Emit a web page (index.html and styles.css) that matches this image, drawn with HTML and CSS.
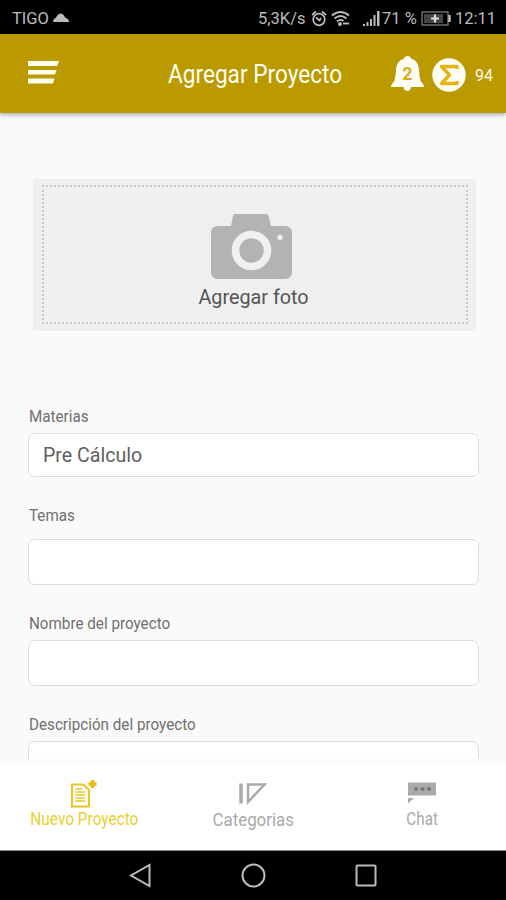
FILE: index.html
```html
<!DOCTYPE html>
<html lang="es">
<head>
  <meta charset="UTF-8" />
  <meta name="viewport" content="width=device-width, initial-scale=1" />
  <title>Agregar Proyecto</title>
  <link rel="stylesheet" href="styles.css">
</head>
<body>

<div class="status-bar">
  <span class="carrier">TIGO</span>
  <svg class="cloud" width="16" height="9" viewBox="0 0 16 9"><path d="M0 9Q0 6 2.500 5Q4 2.500 6 .8Q9 0 11 2.500Q12 4.500 13 5Q16 6 16 9Z" fill="#bbb"/></svg>
  <span class="speed">5,3K/s</span>
  <svg class="alarm" width="16" height="17" viewBox="0 0 16 17" fill="none" stroke="#bbb" stroke-width="1.700"><circle cx="8" cy="9.500" r="5.800"/><path d="M1 5L5 1.500M15 5L11 1.500M5 7.500L8.500 10.500L10 8"/></svg>
  <svg class="wifi" width="19" height="17" viewBox="0 0 19 17" fill="none" stroke="#bbb" stroke-width="1.900"><path d="M1 5.500Q9.500-1.500 18 5.500M3.500 8.500Q9.500 3.500 15.500 8.500M6 11.500Q9.500 8.500 12.500 11"/><circle cx="9" cy="14" r="1" fill="#bbb"/><path d="M12 13.500H18"/></svg>
  <svg class="signal" width="17" height="15" viewBox="0 0 17 15" fill="#bbb"><path d="M0 13h2v2H0zM3.500 11h2v4h-2zM7 8h2v7H7zM10.500 4h2v11h-2zM14 0h2.500v15H14z"/></svg>
  <span class="percent">71 %</span>
  <svg class="battery" width="31" height="15" viewBox="0 0 31 15"><rect x="1" y="1" width="26" height="13" fill="none" stroke="#888" stroke-width="1.200"/><rect x="3" y="3" width="19" height="9" fill="#444"/><path d="M28.500 4v7" stroke="#bbb" stroke-width="2.500"/><path d="M14 3.500v8M10 7.500h8" stroke="#ddd" stroke-width="2.200"/></svg>
  <span class="clock">12:11</span>
</div>

<header>
  <svg class="menu-icon" width="31" height="23" viewBox="0 0 31 23" fill="#fffef0"><path d="M0 0H31L29.200 5H0zM0 9H28.500L27 13.500H0zM0 17.500H26.500L25 22.500H0z"/></svg>
  <h1>Agregar Proyecto</h1>
  <svg class="bell" width="33" height="35" viewBox="0 0 33 35"><path d="M16.500 0Q19.500 0 20 2.500Q27.500 5 28 13L28.500 20Q29 25 32 28Q33 29.500 33 31H20Q19.500 35 16.500 35Q13 35 12.500 31H0Q0 29.500 1 28Q4 25 4.500 20L5 13Q5.500 5 13 2.500Q13.500 0 16.500 0Z" fill="#fffef5"/><text x="16.500" y="24" text-anchor="middle">2</text></svg>
  <svg class="sigma" width="34" height="34" viewBox="0 0 34 34"><circle cx="17" cy="17" r="16.700" fill="#fffef5"/><path d="M25 11V8.500H9.500L17.500 17L9.500 25.500H25V23" fill="none" stroke="#e5b414" stroke-width="3.400" stroke-linejoin="round"/></svg>
  <span class="points">94</span>
</header>

<main>
  <div class="photo">
    <div class="photo-inner">
      <svg width="81" height="65" viewBox="0 0 81 65"><path d="M24 0H55Q57 0 57.500 2L60 12H74Q81 12 81 19V58Q81 65 74 65H7Q0 65 0 58V19Q0 12 7 12H20L22 2Q22.500 0 24 0Z" fill="#b3b3b3"/><circle cx="40.500" cy="36.500" r="16" fill="none" stroke="#f0f0f0" stroke-width="7.500"/><circle cx="69" cy="23.500" r="2.700" fill="#f0f0f0"/></svg>
      <span>Agregar foto</span>
    </div>
  </div>

  <label for="materias">Materias</label>
  <input type="text" id="materias" class="field short" value="Pre Cálculo" />
  <label class="temas" for="temas">Temas</label>
  <input type="text" id="temas" class="field" />
  <label for="nombre">Nombre del proyecto</label>
  <input type="text" id="nombre" class="field" />
  <label for="descripcion">Descripción del proyecto</label>
  <input type="text" id="descripcion" class="field" />
</main>

<nav class="tabs">
  <a class="tab active">
    <svg width="26" height="29" viewBox="0 0 26 29" fill="none" stroke="#e9c622"><path d="M1 5.500H12.500L18 11V27.500H1z" stroke-width="2"/><path d="M4.500 10H11M4.500 13H14M4.500 16H14M4.500 19H14M4.500 22H14" stroke-width="1.500"/><path d="M21.500 1v8M17.500 5h8" stroke="#eabb10" stroke-width="3.500"/></svg>
    <span class="nuevo">Nuevo Proyecto</span>
  </a>
  <a class="tab">
    <svg width="28" height="22" viewBox="0 0 28 22" fill="none" stroke="#aaa"><path d="M2 1V21" stroke-width="3.500"/><path d="M9 2H25.500L9 19.500z" stroke-width="2.500"/></svg>
    <span class="categorias">Categorias</span>
  </a>
  <a class="tab">
    <svg width="28" height="22" viewBox="0 0 28 22"><path d="M0 0H28V13H0zM0 15.500H6L0 21z" fill="#aaa"/><g fill="#777"><circle cx="8" cy="6.500" r="2"/><circle cx="14.500" cy="6.500" r="2"/><circle cx="21" cy="6.500" r="2"/></g></svg>
    <span class="chat">Chat</span>
  </a>
</nav>

<div class="nav-bar">
  <svg width="23" height="25" viewBox="0 0 23 25"><path d="M20.500 2V23L2 12.500z"/></svg>
  <svg width="25" height="25" viewBox="0 0 25 25"><circle cx="12.500" cy="12.500" r="11"/></svg>
  <svg width="23" height="23" viewBox="0 0 23 23"><rect x="1.500" y="1.500" width="19" height="20" rx="1"/></svg>
</div>

</body>
</html>
```

FILE: styles.css
```css
* {
  box-sizing: border-box;
}
body {
  margin: 0;
  height: 900px;
  display: flex;
  flex-direction: column;
  overflow: hidden;
  background: #fafafa;
  font-family: Roboto, sans-serif;
}
svg {
  display: block;
  flex: none;
}

/* Status bar */
.status-bar {
  flex: none;
  height: 34px;
  display: flex;
  align-items: center;
  background: #000;
  color: #bbb;
  font-size: 16.500px;
  white-space: nowrap;
  padding: 2px 0 0 12px;
}
.status-bar span {
  flex: none;
}
.carrier { width: 41px; }
.cloud { margin-top: -2px; }
.speed { width: 53px; margin-left: 189px; }
.wifi { margin-left: 4px; }
.signal { margin-left: 13px; }
.percent { width: 39px; margin-left: 2px; }
.clock { margin-left: 3px; }

/* Header */
header {
  flex: none;
  height: 79px;
  display: flex;
  align-items: center;
  background: #bb9a00;
  color: #fffef0;
  padding-left: 28px;
  box-shadow: 0 2px 4px rgba(0,0,0,0.3);
}
.menu-icon {
  margin-top: -3px;
}
h1 {
  width: 223px;
  margin: 2px 0 0 109px;
  font-size: 25px;
  font-weight: 400;
  white-space: nowrap;
  transform: scaleX(0.905);
  transform-origin: left;
}
.bell text {
  font-size: 18px;
  font-weight: 700;
  fill: #d8ac18;
}
.sigma {
  margin: 3px 0 0 8px;
}
.points {
  margin: 3px 0 0 9px;
  font-size: 16px;
}

/* Form */
main {
  height: 646px;
  flex: none;
  overflow: hidden;
  padding: 66px 28px 0;
}
.photo {
  width: 443px;
  height: 152px;
  margin: 0 0 75px 5px;
  padding: 6px 8px 7px 9px;
  background: #efefef;
}
.photo-inner {
  height: 100%;
  display: flex;
  flex-direction: column;
  align-items: center;
  border: 2px dotted #c8c8c8;
  padding: 27px 8px 0 0;
  color: #555;
  font-size: 19.800px;
}
.photo-inner span {
  margin: 7px 0 0 5px;
}
label {
  display: block;
  width: max-content;
  height: 27px;
  margin-left: 1px;
  line-height: 20px;
  font-size: 17px;
  color: #707070;
  transform: scaleX(0.895);
  transform-origin: left;
}
.field {
  display: block;
  width: 451px;
  height: 46px;
  margin-bottom: 28px;
  padding: 0 14px;
  border: 1.500px solid #ddd;
  border-radius: 7px;
  background: #fff;
  font: 19.600px Roboto, sans-serif;
  color: #606060;
  outline: none;
}
.field.short {
  height: 44px;
}
.temas {
  height: 34px;
}

/* Bottom tabs */
.tabs {
  flex: none;
  height: 87px;
  margin-top: 5px;
  display: grid;
  grid-template-columns: repeat(3, 1fr);
  background: #fff;
  border-bottom: 1px solid #888;
}
.tab {
  display: flex;
  flex-direction: column;
  align-items: center;
  padding-top: 15px;
  color: #aaa;
  font-size: 17.500px;
}
.tab svg {
  height: 29px;
}
.tab span {
  margin-top: 1px;
  white-space: nowrap;
}
.nuevo {
  transform: scaleX(0.88);
}
.tab .categorias {
  margin-top: 2px;
  transform: scaleX(0.965);
}
.chat {
  transform: scaleX(0.87);
}
.active {
  color: #e9cf30;
}

/* Android buttons */
.nav-bar {
  flex: none;
  height: 49px;
  display: flex;
  justify-content: center;
  align-items: center;
  gap: 89px;
  background: #000;
}
.nav-bar svg {
  fill: none;
  stroke: #bbb;
  stroke-width: 2;
}
```
